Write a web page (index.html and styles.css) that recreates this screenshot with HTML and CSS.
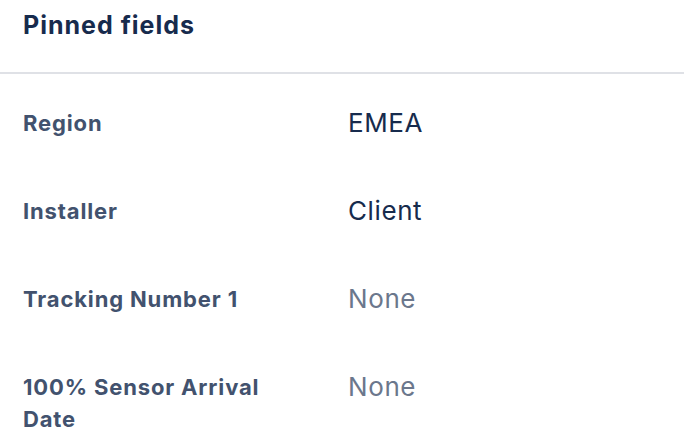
FILE: index.html
```html
<!DOCTYPE html>
<html lang="en">
<head>
<meta charset="utf-8">
<title>Pinned fields</title>
<link rel="stylesheet" href="styles.css">
</head>
<body>
<section class="panel">
  <header class="panel-header">
    <h2 class="panel-title">Pinned fields</h2>
  </header>
  <div class="fields">
    <div class="field">
      <div class="field-label">Region</div>
      <div class="field-value">EMEA</div>
    </div>
    <div class="field">
      <div class="field-label">Installer</div>
      <div class="field-value">Client</div>
    </div>
    <div class="field">
      <div class="field-label">Tracking Number 1</div>
      <div class="field-value field-value--empty">None</div>
    </div>
    <div class="field">
      <div class="field-label">100% Sensor Arrival Date</div>
      <div class="field-value field-value--empty">None</div>
    </div>
  </div>
</section>
</body>
</html>
```
FILE: styles.css
```css
html, body {
  margin: 0;
  padding: 0;
  background: #ffffff;
}
body {
  font-family: Inter, "Noto Sans", "Liberation Sans", sans-serif;
  color: #172b4d;
  overflow: hidden;
}
.panel {
  width: 684px;
}
.panel-header {
  padding: 9px 23px 31px;
  border-bottom: 2px solid #dfe1e6;
}
.panel-title {
  margin: 0;
  font-size: 25px;
  line-height: 32px;
  font-weight: 700;
  letter-spacing: 1px;
  color: #172b4d;
}
.fields {
  padding: 33px 23px 0;
  display: flex;
  flex-direction: column;
  gap: 56px;
}
.field {
  display: grid;
  grid-template-columns: 325px 1fr;
  align-items: start;
}
.field-label {
  font-size: 22px;
  line-height: 32px;
  font-weight: 700;
  letter-spacing: 0.85px;
  color: #42526e;
  max-width: 265px;
}
.field-value {
  font-size: 26px;
  line-height: 32px;
  font-weight: 400;
  letter-spacing: 0.6px;
  color: #172b4d;
}
.field-value--empty {
  color: #6b778c;
}
```
